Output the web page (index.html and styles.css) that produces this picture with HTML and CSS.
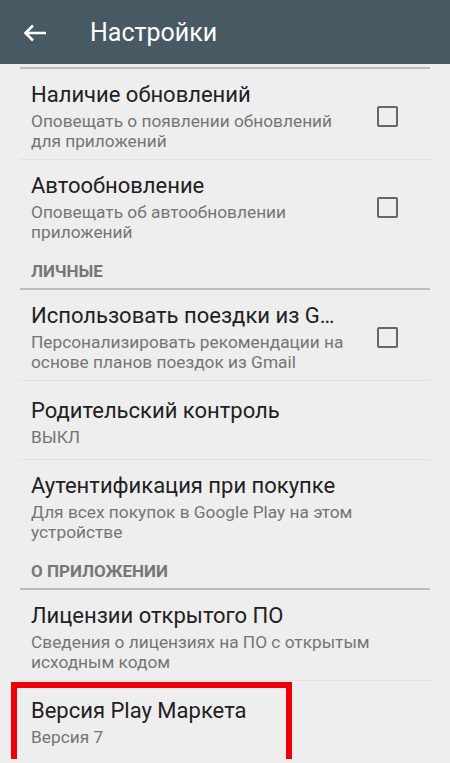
FILE: index.html
```html
<!DOCTYPE html>
<html lang="ru">
<head>
  <meta charset="UTF-8" />
  <meta name="viewport" content="width=device-width, initial-scale=1.0" />
  <title>Настройки</title>
  <link rel="stylesheet" href="styles.css">
</head>
<body>
  <header class="toolbar">
    <svg class="back" width="24" height="18" viewBox="0 0 24 18">
      <path d="M23 9H3M10 1.5L2.5 9l7.5 7.5" fill="none" stroke="#fff" stroke-width="2.6"/>
    </svg>
    <span class="toolbar-title">Настройки</span>
  </header>

  <main class="list">
    <div class="rule"></div>

    <div class="item">
      <div class="text">
        <div class="title">Наличие обновлений</div>
        <div class="summary">Оповещать о появлении обновлений для приложений</div>
      </div>
      <span class="check"></span>
    </div>
    <div class="sep"></div>

    <div class="item">
      <div class="text">
        <div class="title">Автообновление</div>
        <div class="summary">Оповещать об автообновлении приложений</div>
      </div>
      <span class="check"></span>
    </div>

    <div class="category">ЛИЧНЫЕ</div>
    <div class="rule"></div>

    <div class="item">
      <div class="text">
        <div class="title">Использовать поездки из Gmail</div>
        <div class="summary">Персонализировать рекомендации на основе планов поездок из Gmail</div>
      </div>
      <span class="check"></span>
    </div>
    <div class="sep"></div>

    <div class="item short">
      <div class="text">
        <div class="title">Родительский контроль</div>
        <div class="summary">ВЫКЛ</div>
      </div>
    </div>
    <div class="sep"></div>

    <div class="item">
      <div class="text">
        <div class="title">Аутентификация при покупке</div>
        <div class="summary">Для всех покупок в Google Play на этом устройстве</div>
      </div>
    </div>

    <div class="category">О ПРИЛОЖЕНИИ</div>
    <div class="rule"></div>

    <div class="item">
      <div class="text">
        <div class="title">Лицензии открытого ПО</div>
        <div class="summary">Сведения о лицензиях на ПО с открытым исходным кодом</div>
      </div>
    </div>
    <div class="sep"></div>

    <div class="item short marked">
      <div class="text">
        <div class="title">Версия Play Маркета</div>
        <div class="summary">Версия 7</div>
      </div>
      <div class="highlight"></div>
    </div>
  </main>
</body>
</html>
```

FILE: styles.css
```css
body {
  margin: 0;
  padding: 0;
  font-family: Roboto, 'Noto Sans', sans-serif;
  background: #eeeeee;
  overflow: hidden;
}
.toolbar {
  height: 64px;
  background: #475a63;
  display: flex;
  align-items: center;
  padding-left: 23px;
  box-sizing: border-box;
}
.back {
  width: 24px;
  height: 18px;
  margin-top: 1px;
}
.toolbar-title {
  margin-left: 43px;
  color: #fff;
  font-size: 25px;
}
.list {
  padding: 0 20px;
  position: relative;
}
.rule {
  height: 2px;
  margin-top: 3px;
  background: #bdbdbd;
}
.sep {
  height: 1px;
  background: #e2e2e2;
}
.item {
  display: flex;
  align-items: center;
  padding: 13px 0 8px 11px;
  position: relative;
}
.item.short {
  padding-top: 17px;
  padding-bottom: 12px;
}
.text {
  flex: 1;
  min-width: 0;
}
.title {
  font-size: 22px;
  line-height: 25px;
  color: #212121;
  white-space: nowrap;
  overflow: hidden;
  text-overflow: ellipsis;
  max-width: 311px;
}
.summary {
  margin-top: 4px;
  font-size: 17.3px;
  line-height: 20px;
  color: #757575;
}
.check {
  width: 17px;
  height: 17px;
  border: 2.5px solid #666;
  border-radius: 2px;
  margin: 0 32px 0 15px;
  flex: none;
}
.category {
  padding: 11px 0 4px 11px;
  font-size: 17px;
  line-height: 20px;
  font-weight: bold;
  color: #777;
}
.highlight {
  position: absolute;
  left: -9px;
  top: 1px;
  width: 269px;
  height: 80px;
  border: 6px solid #ee0008;
  pointer-events: none;
}
```
